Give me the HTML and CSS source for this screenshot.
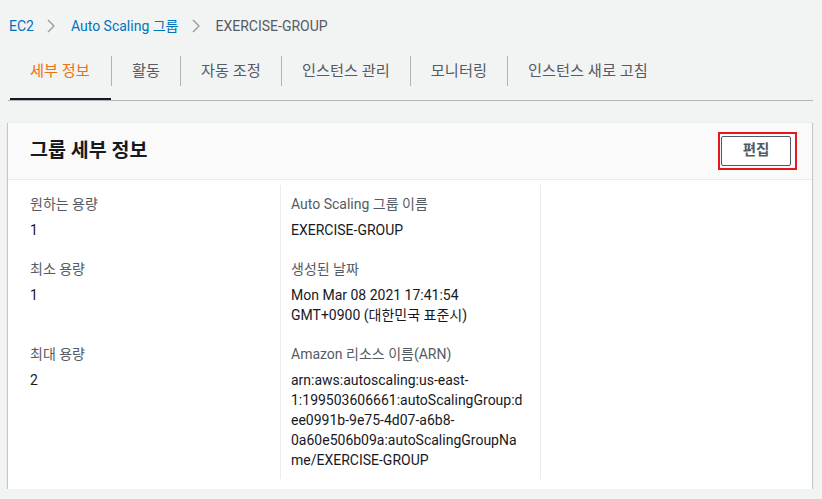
FILE: index.html
```html
<!DOCTYPE html>
<html lang="ko">
<head>
<meta charset="utf-8">
<link rel="stylesheet" href="styles.css">
</head>
<body>
<div class="page">
  <nav class="crumbs">
    <a class="crumb-link">EC2</a>
    <svg class="chev" width="8" height="14" viewBox="0 0 8 14"><polyline points="1,1 7,7 1,13" fill="none" stroke="#95a5a6" stroke-width="1.5"/></svg>
    <a class="crumb-link">Auto Scaling 그룹</a>
    <svg class="chev" width="8" height="14" viewBox="0 0 8 14"><polyline points="1,1 7,7 1,13" fill="none" stroke="#95a5a6" stroke-width="1.5"/></svg>
    <span class="crumb-current">EXERCISE-GROUP</span>
  </nav>

  <ul class="tabs">
    <li class="tab active"><span class="tab-label">세부 정보</span></li>
    <li class="tab"><span class="tab-label">활동</span></li>
    <li class="tab"><span class="tab-label">자동 조정</span></li>
    <li class="tab"><span class="tab-label">인스턴스 관리</span></li>
    <li class="tab"><span class="tab-label">모니터링</span></li>
    <li class="tab"><span class="tab-label">인스턴스 새로 고침</span></li>
  </ul>

  <section class="card">
    <header class="card-header">
      <h2 class="card-title">그룹 세부 정보</h2>
      <span class="highlight"><button class="btn">편집</button></span>
    </header>
    <div class="card-body">
      <div class="grid">
        <div class="cell top"><div class="label">원하는 용량</div><div class="value">1</div></div>
        <div class="cell top divided"><div class="label">Auto Scaling 그룹 이름</div><div class="value">EXERCISE-GROUP</div></div>
        <div class="cell top divided"></div>

        <div class="cell"><div class="label">최소 용량</div><div class="value">1</div></div>
        <div class="cell divided"><div class="label">생성된 날짜</div><div class="value">Mon Mar 08 2021 17:41:54<br>GMT+0900 (대한민국 표준시)</div></div>
        <div class="cell divided"></div>

        <div class="cell bottom"><div class="label">최대 용량</div><div class="value">2</div></div>
        <div class="cell bottom divided"><div class="label">Amazon 리소스 이름(ARN)</div><div class="value">arn:aws:autoscaling:us-east-<br>1:199503606661:autoScalingGroup:d<br>ee0991b-9e75-4d07-a6b8-<br>0a60e506b09a:autoScalingGroupNa<br>me/EXERCISE-GROUP</div></div>
        <div class="cell bottom divided"></div>
      </div>
    </div>
  </section>
</div>
</body>
</html>
```

FILE: styles.css
```css
* { box-sizing: border-box; }

html, body {
  margin: 0;
  padding: 0;
  background: #f2f3f3;
}

body {
  font-family: Roboto, "Noto Sans CJK KR", sans-serif;
  font-size: 14px;
  line-height: 20px;
  color: #16191f;
}

.page {
  padding: 0 10px 0 8px;
}

.crumbs {
  display: flex;
  align-items: center;
  padding-top: 16px;
  padding-left: 1px;
  height: 36px;
}

.crumb-link {
  color: #0073bb;
}

.crumb-current {
  color: #545b64;
}

.chev {
  display: block;
  margin: 0 16px 0 13px;
}

.tabs {
  list-style: none;
  margin: 6px 0 0;
  padding: 0 0 0 2px;
  display: flex;
  border-bottom: 1px solid #aab7b8;
  width: 805px;
  font-size: 15.25px;
}

.tab {
  padding: 14px 0 12px;
  border-bottom: 2px solid transparent;
  color: #545b64;
}

.tab-label {
  display: block;
  line-height: 30px;
  padding: 0 20px;
  border-left: 1px solid #aab7b8;
}

.tab:first-child .tab-label {
  border-left: 0;
  padding-right: 21px;
}

.tab.active {
  border-bottom-color: #16191f;
  color: #ec7211;
}

.card {
  margin-top: 21px;
  background: #fff;
  width: 804px;
  box-shadow: 0 1px 1px 0 rgba(0, 28, 36, 0.3), 1px 1px 1px 0 rgba(0, 28, 36, 0.15), -1px 1px 1px 0 rgba(0, 28, 36, 0.15);
  border-top: 1px solid #eaeded;
}

.card-header {
  display: flex;
  align-items: center;
  justify-content: space-between;
  background: #fafafa;
  border-bottom: 1px solid #eaeded;
  padding: 9px 15px 9px 22px;
}

.card-title {
  margin: 0;
  font-size: 19.5px;
  line-height: 24px;
  font-weight: 700;
  color: #16191f;
}

.highlight {
  display: block;
  border: 2px solid #e5171f;
  padding: 2px 4px 2px 1px;
}

.btn {
  display: block;
  font-family: inherit;
  font-size: 14.5px;
  line-height: 20px;
  font-weight: 700;
  color: #545b64;
  background: #fff;
  border: 1px solid #545b64;
  border-radius: 2px;
  padding: 4px 0;
  width: 70px;
  text-align: center;
}

.card-body {
  padding: 5px 12px 10px;
}

.grid {
  display: grid;
  grid-template-columns: repeat(3, 260px);
}

.cell {
  padding: 0 10px 19px;
}

.cell.top { padding-top: 9px; }
.cell.bottom { padding-bottom: 9px; }

.cell.divided {
  border-left: 1px solid #eaeded;
}

.label {
  color: #545b64;
}

.value {
  margin-top: 6px;
  color: #16191f;
}
```
